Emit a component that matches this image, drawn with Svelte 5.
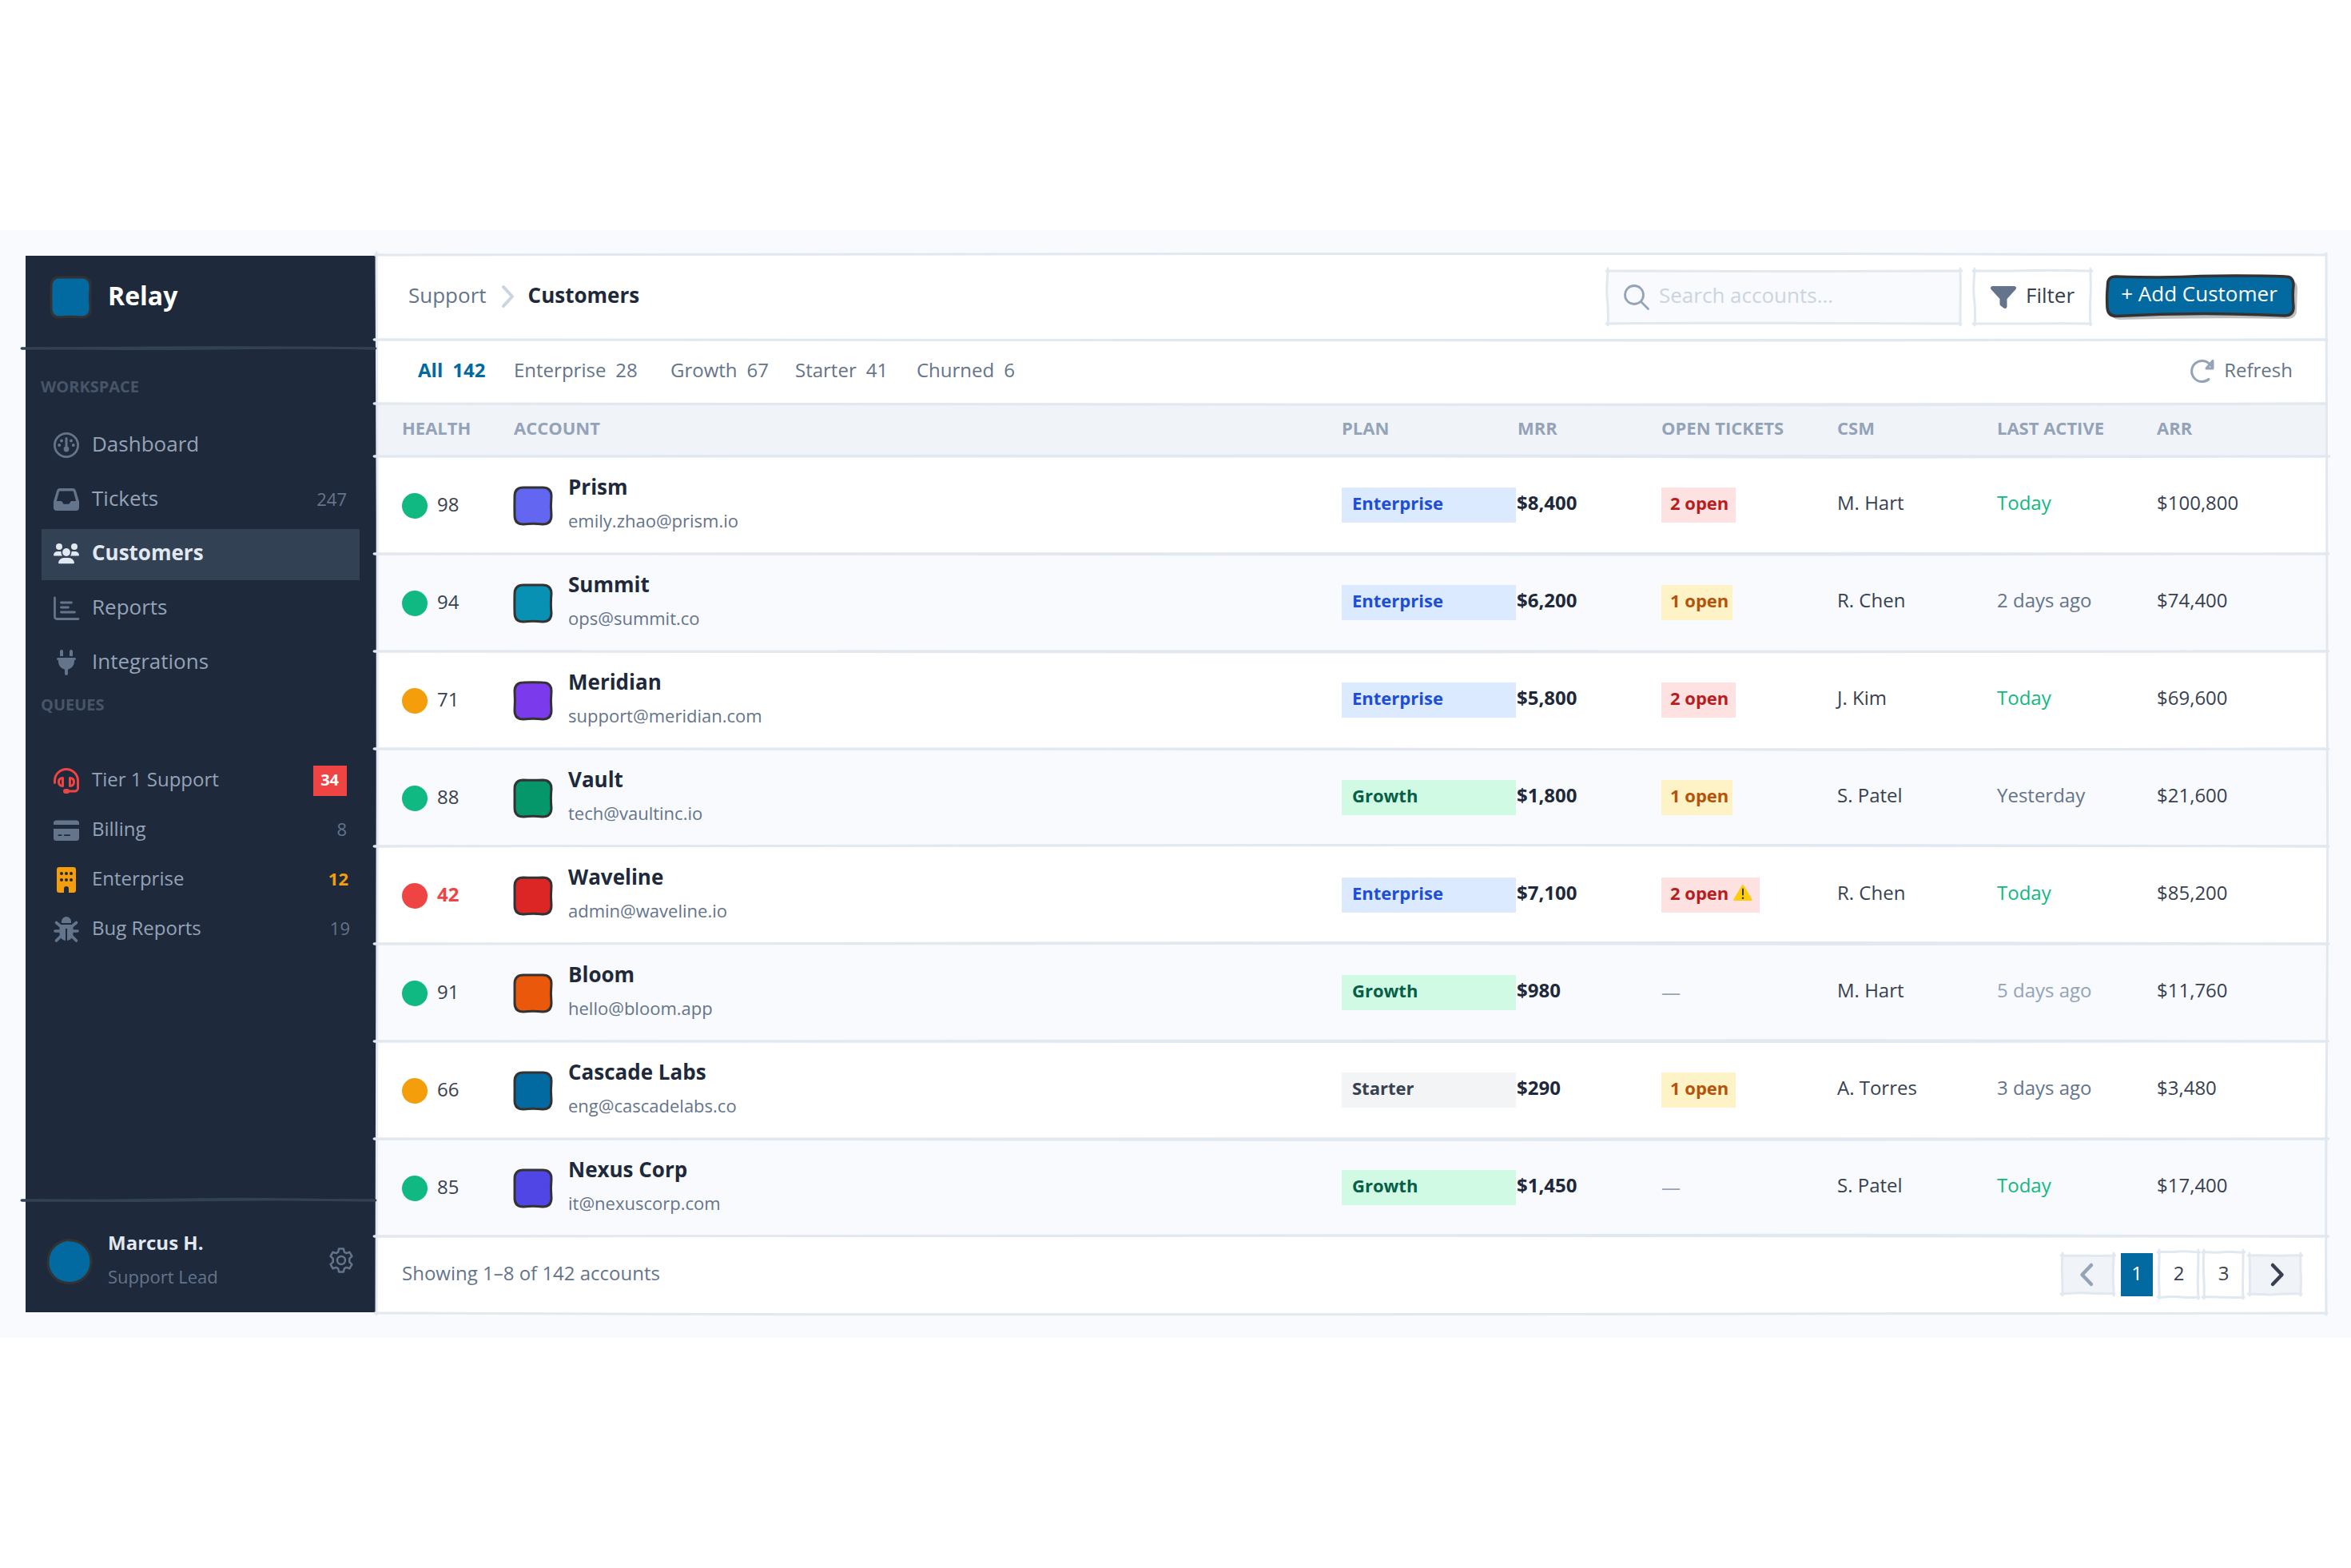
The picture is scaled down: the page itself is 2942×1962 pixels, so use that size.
<script lang="ts">
	type Wobble = { w: number; h: number; seed: number };

	const mainNav = [
		{ icon: 'gauge', label: 'Dashboard', count: '' },
		{ icon: 'inbox', label: 'Tickets', count: '247' },
		{ icon: 'users', label: 'Customers', count: '', active: true },
		{ icon: 'chart', label: 'Reports', count: '' },
		{ icon: 'plug', label: 'Integrations', count: '' }
	];

	const queues = [
		{ icon: 'headset', label: 'Tier 1 Support', count: '34', tone: 'urgent' },
		{ icon: 'card', label: 'Billing', count: '8', tone: '' },
		{ icon: 'building', label: 'Enterprise', count: '12', tone: 'warn' },
		{ icon: 'bug', label: 'Bug Reports', count: '19', tone: 'wide' }
	];

	const tabs = [
		{ label: 'All', count: 142, width: 120 },
		{ label: 'Enterprise', count: 28, width: 196 },
		{ label: 'Growth', count: 67, width: 156 },
		{ label: 'Starter', count: 41, width: 152 },
		{ label: 'Churned', count: 6, width: 130 }
	];
	let activeTab = $state('All');

	const columns = ['Health', 'Account', 'Plan', 'MRR', 'Open Tickets', 'CSM', 'Last Active', 'ARR'];

	const accounts = [
		{ health: 98, color: '#6366f1', name: 'Prism', email: 'emily.zhao@prism.io', plan: 'Enterprise', mrr: '$8,400', open: 2, csm: 'M. Hart', active: 'Today', arr: '$100,800' },
		{ health: 94, color: '#0891b2', name: 'Summit', email: 'ops@summit.co', plan: 'Enterprise', mrr: '$6,200', open: 1, tight: true, csm: 'R. Chen', active: '2 days ago', arr: '$74,400' },
		{ health: 71, color: '#7c3aed', name: 'Meridian', email: 'support@meridian.com', plan: 'Enterprise', mrr: '$5,800', open: 2, csm: 'J. Kim', active: 'Today', arr: '$69,600' },
		{ health: 88, color: '#059669', name: 'Vault', email: 'tech@vaultinc.io', plan: 'Growth', mrr: '$1,800', open: 1, tight: true, csm: 'S. Patel', active: 'Yesterday', arr: '$21,600' },
		{ health: 42, color: '#dc2626', name: 'Waveline', email: 'admin@waveline.io', plan: 'Enterprise', mrr: '$7,100', open: 2, alert: true, csm: 'R. Chen', active: 'Today', arr: '$85,200' },
		{ health: 91, color: '#ea580c', name: 'Bloom', email: 'hello@bloom.app', plan: 'Growth', mrr: '$980', open: 0, csm: 'M. Hart', active: '5 days ago', stale: true, arr: '$11,760' },
		{ health: 66, color: '#0369a1', name: 'Cascade Labs', email: 'eng@cascadelabs.co', plan: 'Starter', mrr: '$290', open: 1, csm: 'A. Torres', active: '3 days ago', arr: '$3,480' },
		{ health: 85, color: '#4f46e5', name: 'Nexus Corp', email: 'it@nexuscorp.com', plan: 'Growth', mrr: '$1,450', open: 0, csm: 'S. Patel', active: 'Today', arr: '$17,400' }
	];

	function healthTone(score: number) {
		if (score >= 80) return 'good';
		return score >= 60 ? 'fair' : 'poor';
	}

	// repeatable offset between -1 and 1
	function jitter(seed: number, i: number) {
		const n = Math.sin(seed * 12.9898 + i * 78.233) * 43758.5453;
		return (n - Math.floor(n)) * 2 - 1;
	}

	// a slightly bent stroke between two points
	function stroke(x1: number, y1: number, x2: number, y2: number, seed: number, bend = 1.8) {
		const dx = x2 - x1;
		const dy = y2 - y1;
		const flat = Math.abs(dx) > Math.abs(dy);
		const at = (t: number, i: number) => {
			const j = jitter(seed, i) * bend;
			return `${x1 + dx * t + (flat ? 0 : j)} ${y1 + dy * t + (flat ? j : 0)}`;
		};
		return `M${x1} ${y1}C${at(0.15, 1)} ${at(0.3, 2)} ${at(0.5, 3)}S${at(0.8, 4)} ${x2} ${y2}`;
	}

	function box({ w, h, seed }: Wobble) {
		return [
			stroke(-2, 0, w + 2, 0, seed, 1),
			stroke(w, -3, w, h + 2, seed + 1, 1),
			stroke(w + 1, h, -2, h, seed + 2, 1),
			stroke(0, h + 2, 0, -3, seed + 3, 1)
		].join('');
	}

	// rounded square with edges that are not quite straight
	function blob({ w, h, seed }: Wobble, r: number) {
		const j = (i: number) => jitter(seed, i) * 0.9;
		return `M${r} 0Q${w / 2} ${j(1)} ${w - r} 0Q${w} 0 ${w} ${r}Q${w - 1.2} ${h / 2} ${w} ${h - r}Q${w} ${h} ${w - r} ${h}Q${w / 2} ${h - 1.4} ${r} ${h}Q0 ${h} 0 ${h - r}Q${j(2)} ${h / 2} 0 ${r}Q0 0 ${r} 0Z`;
	}
</script>

{#snippet icon(name: string)}
	{#if name === 'gauge'}
		<svg class="icon" viewBox="0 0 32 32" fill="none" stroke="currentColor" stroke-width="2.8">
			<circle cx="16" cy="16" r="14.600" />
			<path d="M16 7.5v13" stroke-width="3" stroke-linecap="round" />
			<circle cx="16" cy="21" r="3.4" fill="currentColor" stroke="none" />
			<g fill="currentColor" stroke="none">
				<circle cx="10" cy="10.4" r="2" /><circle cx="22" cy="10.4" r="2" />
				<circle cx="7.2" cy="16" r="2" /><circle cx="24.8" cy="16" r="2" />
			</g>
		</svg>
	{:else if name === 'inbox'}
		<svg class="icon" viewBox="0 0 32 32" fill="currentColor">
			<path fill-rule="evenodd" d="M8 2h16a4 4 0 0 1 3.9 3L32 18.500V26a4 4 0 0 1-4 4H4a4 4 0 0 1-4-4v-7.500L4.100 5A4 4 0 0 1 8 2zM8 5.500a1 1 0 0 0-1 .7L3.900 18h5.300a2 2 0 0 1 1.800 1.100l.8 1.600a2 2 0 0 0 1.700 1h5a2 2 0 0 0 1.700-1l.8-1.600a2 2 0 0 1 1.800-1.100h5.300L25 6.200a1 1 0 0 0-1-.7z" />
		</svg>
	{:else if name === 'users'}
		<svg class="icon" viewBox="0 0 32 32" fill="currentColor">
			<circle cx="7" cy="7" r="4" /><circle cx="26" cy="7" r="4" /><circle cx="16" cy="14" r="4.900" />
			<path d="M0 17.500A5.200 5.200 0 0 1 5.200 13h3.200q.6 0 1.200.2A6.800 6.800 0 0 0 11 18.500H1q-1 0-1-1zM32 17.500A5.200 5.200 0 0 0 26.800 13h-3.200q-.6 0-1.200.2a6.800 6.800 0 0 1-1.400 5.300H31q1 0 1-1z" />
			<path d="M6 27.200A7 7 0 0 1 13 21h6a7 7 0 0 1 7 6.200q0 1-1.200 1H7.200Q6 28.200 6 27.200z" />
		</svg>
	{:else if name === 'chart'}
		<svg class="icon" viewBox="0 0 32 32" fill="none" stroke="currentColor" stroke-width="2.800" stroke-linecap="round">
			<path d="M1.500 3v23.500q0 3 3 3H31M9.500 9h13M9.500 15h9M9.500 21h17" />
		</svg>
	{:else if name === 'plug'}
		<svg class="icon" viewBox="0 0 32 32" fill="currentColor">
			<path d="M8 2a2 2 0 0 1 4 0v6H8zM20 2a2 2 0 0 1 4 0v6h-4zM5.500 10h21a1.500 1.500 0 0 1 0 3H26v2a10 10 0 0 1-8 9.800V30a2 2 0 0 1-4 0v-5.200A10 10 0 0 1 6 15v-2h-.5a1.500 1.500 0 0 1 0-3z" />
		</svg>
	{:else if name === 'headset'}
		<svg class="icon" viewBox="0 0 32 32" fill="none" stroke="currentColor" stroke-width="3" stroke-linecap="round">
			<path d="M1.500 18.500V16a14.500 14.500 0 0 1 29 0v9a4 4 0 0 1-4 4H18" />
			<path d="M11.500 12.500v10q-5 0-5-5t5-5zM20.500 12.500v10q5 0 5-5t-5-5z" stroke-linejoin="round" />
			<rect x="13.500" y="27.500" width="5" height="3" rx="1.500" />
		</svg>
	{:else if name === 'card'}
		<svg class="icon" viewBox="0 0 32 32" fill="currentColor">
			<path d="M3.500 3.500h25A3.500 3.500 0 0 1 32 7v2H0V7a3.500 3.500 0 0 1 3.500-3.500z" />
			<path fill-rule="evenodd" d="M0 14h32v11.500a3.500 3.500 0 0 1-3.500 3.500h-25A3.500 3.500 0 0 1 0 25.500zM6.300 21.200a.9.900 0 0 0 0 1.800h3.400a.9.900 0 0 0 0-1.800zM13.800 21.200a.9.900 0 0 0 0 1.800h6.400a.9.900 0 0 0 0-1.800z" />
		</svg>
	{:else if name === 'building'}
		<svg class="icon" viewBox="0 0 32 32">
			<path fill="currentColor" d="M7 0h18a3 3 0 0 1 3 3v26a3 3 0 0 1-3 3h-6v-5a3 3 0 0 0-6 0v5H7a3 3 0 0 1-3-3V3a3 3 0 0 1 3-3z" />
			<g fill="#1e293b">
				<circle cx="10" cy="8" r="2" /><circle cx="16" cy="8" r="2" /><circle cx="22" cy="8" r="2" />
				<circle cx="10" cy="16" r="2" /><circle cx="16" cy="16" r="2" /><circle cx="22" cy="16" r="2" />
			</g>
		</svg>
	{:else if name === 'bug'}
		<svg class="icon" viewBox="0 0 32 32" fill="none" stroke="currentColor" stroke-width="3.600" stroke-linecap="round">
			<path d="M3.500 7.500l6 5M28.500 7.500l-6 5M2 18h6M30 18h-6M3.500 30l6-6M28.500 30l-6-6" />
			<path d="M10 7.500V6a6 6 0 0 1 12 0v1.500a.5.500 0 0 1-.5.500h-11a.5.500 0 0 1-.5-.5zM9.500 10h13a2 2 0 0 1 2 2v9a8.500 8.500 0 0 1-7.500 9V15h-2v15a8.500 8.500 0 0 1-7.500-9v-9a2 2 0 0 1 2-2z" fill="currentColor" stroke="none" />
		</svg>
	{/if}
{/snippet}

{#snippet rule(seed: number, w: number, dark = false)}
	<svg class="rule" class:dark viewBox="0 0 {w} 8" width={w} height="8">
		<path d={stroke(-3, 4, w, 4, seed)} />
		<path d={stroke(-2, 4, w + 1, 4, seed + 9)} />
	</svg>
{/snippet}

{#snippet frame(w: number, h: number, seed: number)}
	<svg class="frame" viewBox="0 0 {w} {h}" width={w} height={h}>
		<path d={box({ w, h, seed })} />
	</svg>
{/snippet}

<div class="page">
	<aside class="sidebar">
		<div class="brand">
			<svg class="logo" viewBox="-2 -2 53 54" width="53" height="54">
				<path d={blob({ w: 49, h: 50, seed: 3 }, 11)} fill="#0369a1" stroke="#333" stroke-width="3" />
			</svg>
			<span>Relay</span>
			{@render rule(4, 439, true)}
		</div>

		<p class="section">WORKSPACE</p>
		<nav class="nav">
			{#each mainNav as item}
				<a class="item" class:active={item.active} href="#{item.icon}">
					{@render icon(item.icon)}
					<span class="label">{item.label}</span>
					<span class="count">{item.count}</span>
				</a>
			{/each}
		</nav>

		<p class="section queues">QUEUES</p>
		<nav class="nav small">
			{#each queues as item}
				<a class="item {item.tone}" href="#{item.icon}">
					{@render icon(item.icon)}
					<span class="label">{item.label}</span>
					<span class="count">{item.count}</span>
				</a>
			{/each}
		</nav>

		<div class="user">
			{@render rule(7, 439, true)}
			<svg class="avatar" viewBox="0 0 58 60" width="58" height="60">
				<path d="M28 3C43 2 56 14 56 29.500C56 45 44 56.500 29 56.500C13 56.500 2 45 2 30C2 15 13 3 30 2" fill="#0369a1" stroke="#333" stroke-width="3" />
			</svg>
			<div class="who">
				<strong>Marcus H.</strong>
				<span>Support Lead</span>
			</div>
			<svg class="gear" viewBox="0 0 32 32" width="32" height="32" fill="none" stroke="currentColor" stroke-width="2.500" stroke-linejoin="round">
				<path d="M13.100 1.500h5.800l1 4.200 2.400 1.400 4.200-1.300 2.900 5-3.100 3v4.400l3.100 3-2.900 5-4.200-1.300-2.400 1.400-1 4.200h-5.800l-1-4.200-2.400-1.400-4.200 1.300-2.900-5 3.100-3v-4.400l-3.100-3 2.900-5 4.200 1.300 2.400-1.400z" />
				<circle cx="16" cy="16" r="5" />
			</svg>
		</div>
	</aside>

	<main class="main">
		<header class="topbar">
			<span class="crumb">Support</span>
			<svg class="sep" viewBox="0 0 16 28" width="16" height="28"><path d="M2 2l11 12L2 26" /></svg>
			<strong class="crumb current">Customers</strong>

			<div class="search">
				{@render frame(441, 66, 11)}
				<svg viewBox="0 0 32 32" width="32" height="32" fill="none" stroke="#94a3b8" stroke-width="2.800" stroke-linecap="round">
					<circle cx="13" cy="13" r="11.500" /><path d="M21.500 21.500L30.500 30.500" />
				</svg>
				<span>Search accounts...</span>
			</div>
			<button class="filter">
				{@render frame(145, 66, 15)}
				<svg viewBox="0 0 32 28" width="32" height="28"><path d="M2 0h28q3 1 1.500 4L20.500 16v10q-1 3-4 1.500l-4-3q-1-1-1-2V16L.5 4Q-1 1 2 0z" fill="#64748b" /></svg>
				<span>Filter</span>
			</button>
			<button class="add">
				<svg class="add-bg" viewBox="0 0 242 58" width="242" height="58">
					<path d="M17 7Q120 9 229 7Q241 7 241 18L240 45Q240 56 228 56Q120 54 18 57Q8 57 7 46L6 18Q6 7 17 7z" fill="#000" opacity=".25" />
					<path d="M14 3Q80 5 120 2.500Q180 1.500 226 3Q236 3 236 14Q234.500 26 236 41Q236 52 225 52Q120 47 15 52.500Q4 53 3 42Q2 28 3.500 14Q3 3 14 3z" fill="#0369a1" stroke="#333" stroke-width="3.500" />
				</svg>
				<span>+ Add Customer</span>
			</button>
			{@render rule(21, 2440)}
		</header>

		<div class="tabs">
			{#each tabs as tab}
				<button class="tab" class:selected={activeTab === tab.label} style="width: {tab.width}px" onclick={() => (activeTab = tab.label)}>
					<span>{tab.label}</span>
					<span>{tab.count}</span>
				</button>
			{/each}
			<button class="refresh">
				<svg viewBox="0 0 32 32" width="32" height="32" fill="none" stroke="#94a3b8" stroke-width="3" stroke-linecap="round" stroke-linejoin="round">
					<path d="M24 27.500A13 13 0 1 1 25 8.500L28.500 12M29 4.500v9.500h-8z" />
				</svg>
				<span>Refresh</span>
			</button>
			{@render rule(22, 2440)}
		</div>

		<div class="row head">
			{#each columns as column}
				<span>{column}</span>
			{/each}
			{@render rule(23, 2443)}
		</div>

		{#each accounts as account, i}
			<div class="row" class:alt={i % 2 === 1}>
				<div class="health {healthTone(account.health)}">
					<i class="dot"></i>
					<span>{account.health}</span>
				</div>
				<div class="account">
					<svg viewBox="-2 -2 50 50" width="50" height="50">
						<path d={blob({ w: 46, h: 46, seed: i + 2 }, 11)} fill={account.color} stroke="#333" stroke-width="3" />
					</svg>
					<div class="ident">
						<strong>{account.name}</strong>
						<span>{account.email}</span>
					</div>
				</div>
				<span class="plan {account.plan.toLowerCase()}">{account.plan}</span>
				<strong class="cell">{account.mrr}</strong>
				<div>
					{#if account.open}
						<span class="open" class:many={account.open > 1} class:tight={account.tight}>
							{account.open} open
							{#if account.alert}
								<svg viewBox="0 0 24 20" width="24" height="20">
									<path d="M10.600 1Q12-.5 13.400 1L23.500 18.500Q24 20 22.500 20h-21Q0 20 .5 18.500z" fill="#ffcc0a" />
									<path d="M12 5.500v7" stroke="#333" stroke-width="2" stroke-linecap="round" />
									<circle cx="12" cy="16.700" r="1.300" fill="#333" />
								</svg>
							{/if}
						</span>
					{:else}
						<span class="none">—</span>
					{/if}
				</div>
				<span class="cell">{account.csm}</span>
				<span class="cell last" class:today={account.active === 'Today'} class:stale={account.stale}>{account.active}</span>
				<span class="cell">{account.arr}</span>
				{@render rule(30 + i, 2442)}
			</div>
		{/each}

		<footer class="foot">
			<span>Showing 1–8 of 142 accounts</span>
			<div class="pager">
				<button class="step prev">
					{@render frame(64, 48, 41)}
					<svg viewBox="0 0 16 28" width="16" height="28"><path d="M14 2L2.500 14L14 26" /></svg>
				</button>
				<button class="num on">1</button>
				<button class="num">{@render frame(49, 56, 43)}2</button>
				<button class="num">{@render frame(49, 56, 47)}3</button>
				<button class="step next">
					{@render frame(64, 48, 52)}
					<svg viewBox="0 0 16 28" width="16" height="28"><path d="M2 2l11.500 12L2 26" /></svg>
				</button>
			</div>
		</footer>
		<svg class="outline" viewBox="0 0 2440 1324" width="2440" height="1324">
			<path d={stroke(-2, 0, 2440, 0, 61)} />
			<path d={stroke(2440, -2, 2440, 1326, 62)} />
			<path d={stroke(2441, 1324, -2, 1324, 63)} />
			<path d={stroke(0, 1326, 0, -3, 64)} />
		</svg>
	</main>
</div>

<style>
	:global(body) {
		background: #fff;
	}
	.page {
		display: flex;
		box-sizing: border-box;
		width: 2942px;
		height: 1386px;
		margin-top: 288px;
		padding: 32px 31px 32px 32px;
		background: #f8fafd;
		color: #374151;
		font-family: 'Open Sans', 'Noto Sans', sans-serif;
		font-size: 24px;
		line-height: 32px;
	}
	button {
		margin: 0;
		padding: 0;
		border: 0;
		background: none;
		color: inherit;
		font: inherit;
	}
	svg {
		display: block;
		flex: none;
		overflow: visible;
	}
	.rule {
		position: absolute;
		left: 0;
		bottom: -4px;
		z-index: 1;
		fill: none;
		stroke: #e2e8f0;
		stroke-width: 2.8;
		stroke-linecap: round;
	}
	.rule.dark {
		left: -2px;
		stroke: #334155;
	}
	.frame,
	.outline {
		position: absolute;
		left: 0;
		top: 0;
		fill: none;
		stroke: #e2e8f0;
		stroke-width: 3;
		stroke-linecap: round;
	}

	/* sidebar */
	.sidebar {
		display: flex;
		flex-direction: column;
		flex: none;
		width: 439px;
		height: 1322px;
		background: #1e293b;
	}
	.brand {
		position: relative;
		display: flex;
		gap: 20px;
		height: 116px;
		padding: 25px 0 0 30px;
		box-sizing: border-box;
		color: #fff;
		font-size: 32px;
		font-weight: 700;
		line-height: 50px;
	}
	.section {
		margin: 0;
		padding: 32px 0 0 19px;
		color: #475569;
		font-size: 20px;
		font-weight: 700;
		line-height: 32px;
	}
	.section.queues {
		padding-top: 4px;
	}
	.nav {
		display: flex;
		flex-direction: column;
		gap: 4px;
		padding: 26px 21px 0 20px;
	}
	.item {
		display: flex;
		align-items: center;
		height: 64px;
		padding: 0 16px 0 15px;
		box-sizing: border-box;
		color: #94a3b8;
		font-size: 26px;
		text-decoration: none;
	}
	.icon {
		width: 32px;
		height: 32px;
		margin: -2px 16px 0 0;
		color: #64748b;
	}
	.label {
		flex: 1;
		padding-bottom: 6px;
		white-space: nowrap;
	}
	.count {
		padding-bottom: 4px;
		color: #64748b;
		font-size: 22px;
	}
	.active {
		background: #334155;
		color: #e2e8f0;
		font-weight: 700;
	}
	.active .icon {
		color: #e2e8f0;
	}
	.small {
		gap: 0;
		padding-top: 48px;
	}
	.small .item {
		height: 62px;
		font-size: 24px;
	}
	.small .label {
		padding-bottom: 4px;
	}
	.small .icon {
		margin-top: 0;
	}
	.urgent .icon {
		color: #ef4444;
	}
	.urgent .count {
		height: 38px;
		padding: 0 10px 0 9px;
		background: #ef4444;
		color: #fff;
		font-size: 20px;
		font-weight: 700;
		line-height: 36px;
	}
	.warn .icon,
	.warn .count {
		color: #f59e0b;
	}
	.warn .count {
		margin-right: -2px;
		font-weight: 700;
	}
	.wide .count {
		margin-right: -4px;
	}
	.user {
		position: relative;
		display: flex;
		height: 140px;
		margin-top: auto;
		padding: 46px 28px 0 26px;
		box-sizing: border-box;
	}
	.user .rule {
		top: -4px;
	}
	.avatar {
		margin-top: 1px;
	}
	.who {
		display: flex;
		flex: 1;
		flex-direction: column;
		gap: 10px;
		padding-left: 19px;
	}
	.who strong {
		margin-top: -9px;
		color: #e2e8f0;
	}
	.who span {
		color: #64748b;
		font-size: 22px;
	}
	.gear {
		margin-top: 13px;
		color: #64748b;
	}

	/* main panel */
	.main {
		position: relative;
		display: flex;
		flex: 1;
		flex-direction: column;
		height: 1324px;
		margin-top: -1px;
		background: #fff;
	}
	.topbar {
		position: relative;
		display: flex;
		height: 106px;
		padding: 20px 39px 0 40px;
		box-sizing: border-box;
		font-size: 26px;
		line-height: 66px;
	}
	.crumb {
		margin-top: -3px;
		color: #64748b;
	}
	.current {
		color: #1e293b;
	}
	.sep {
		margin: 18px 17px 0 19px;
		fill: none;
		stroke: #cbd5e1;
		stroke-width: 4;
		stroke-linecap: round;
		stroke-linejoin: round;
	}
	.search,
	.filter {
		position: relative;
		display: flex;
		align-items: center;
		box-sizing: border-box;
		height: 66px;
	}
	.search {
		width: 441px;
		margin-left: auto;
		padding-left: 20px;
		background: #f8fafd;
		color: #cbd5e1;
	}
	.search span,
	.filter span {
		padding: 0 0 6px 12px;
	}
	.filter {
		width: 145px;
		margin-left: 18px;
		padding-left: 20px;
	}
	.add {
		position: relative;
		width: 238px;
		height: 52px;
		margin: 5px 0 0 18px;
		color: #fff;
		line-height: 42px;
		white-space: nowrap;
	}
	.add-bg {
		position: absolute;
		left: 0;
		top: -1px;
	}
	.add span {
		position: relative;
		top: -3px;
		left: -1px;
	}
	.tabs {
		position: relative;
		display: flex;
		align-items: center;
		height: 80px;
		padding: 0 42px 4px 52px;
		box-sizing: border-box;
		color: #64748b;
	}
	.tab {
		display: flex;
		gap: 12px;
	}
	.selected {
		color: #0369a1;
		font-weight: 700;
	}
	.refresh {
		display: flex;
		gap: 11px;
		margin-left: auto;
	}
	.row {
		position: relative;
		display: grid;
		grid-template-columns: 140px 1fr 220px 180px 220px 200px 200px 180px;
		align-items: center;
		height: 122px;
		padding: 0 32px;
		box-sizing: border-box;
	}
	.row.alt {
		background: #f8fafd;
	}
	.row.head {
		height: 66px;
		padding-bottom: 6px;
		background: #f0f4f8;
		color: #94a3b8;
		font-size: 22px;
		font-weight: 700;
		text-transform: uppercase;
	}
	.health {
		display: flex;
		align-items: center;
		gap: 12px;
		padding-top: 1px;
	}
	.dot {
		width: 32px;
		height: 32px;
		border-radius: 50%;
		background: #10b981;
	}
	.health span {
		padding-bottom: 3px;
	}
	.fair .dot {
		background: #f59e0b;
	}
	.poor .dot {
		background: #ef4444;
	}
	.poor span {
		color: #ef4444;
		font-weight: 700;
	}
	.account {
		display: flex;
		align-items: center;
		gap: 19px;
		margin-left: -1px;
		padding-top: 2px;
	}
	.ident {
		display: flex;
		flex-direction: column;
		gap: 10px;
		margin-top: -7px;
	}
	.ident strong {
		color: #1e293b;
		font-size: 26px;
	}
	.ident span {
		color: #64748b;
		font-size: 22px;
	}
	.plan {
		height: 44px;
		margin-right: 2px;
		padding-left: 13px;
		font-size: 22px;
		font-weight: 700;
		line-height: 38px;
	}
	.plan.enterprise {
		background: #dbeafe;
		color: #1d4ed8;
	}
	.plan.growth {
		background: #d1fae5;
		color: #065f46;
	}
	.plan.starter {
		background: #f3f4f6;
	}
	.cell {
		padding-bottom: 6px;
	}
	strong.cell {
		margin-left: -1px;
		color: #1e293b;
	}
	.open {
		display: inline-flex;
		gap: 6px;
		height: 44px;
		padding: 0 9px 0 11px;
		background: #fef3c7;
		color: #b45309;
		font-size: 22px;
		font-weight: 700;
		line-height: 38px;
		vertical-align: top;
	}
	.open svg {
		margin-top: 9px;
	}
	.many {
		background: #fee2e2;
		color: #b91c1c;
	}
	.tight {
		padding-right: 5px;
	}
	.none,
	.stale.last {
		color: #94a3b8;
	}
	.last {
		color: #64748b;
	}
	.today {
		color: #10b981;
	}
	.foot {
		display: flex;
		align-items: center;
		justify-content: space-between;
		height: 96px;
		padding: 0 32px;
		box-sizing: border-box;
		color: #64748b;
	}
	.foot > span {
		padding-bottom: 4px;
	}
	.pager {
		display: flex;
		align-items: center;
		gap: 7px;
	}
	.pager button {
		position: relative;
	}
	.step {
		display: flex;
		align-items: center;
		justify-content: center;
		width: 64px;
		height: 48px;
		box-sizing: border-box;
		background: #f0f4f8;
		fill: none;
		stroke: #94a3b8;
		stroke-width: 4.5;
		stroke-linecap: round;
		stroke-linejoin: round;
	}
	.prev {
		margin-right: 2px;
		padding-right: 5px;
	}
	.next {
		margin-left: 1px;
		padding-left: 5px;
		stroke: #374151;
	}
	.num {
		width: 49px;
		height: 56px;
		padding-bottom: 5px;
		color: #374151;
		line-height: 46px;
	}
	.num.on {
		width: 40px;
		height: 54px;
		margin-right: 1px;
		background: #0369a1;
		color: #fff;
	}
</style>
